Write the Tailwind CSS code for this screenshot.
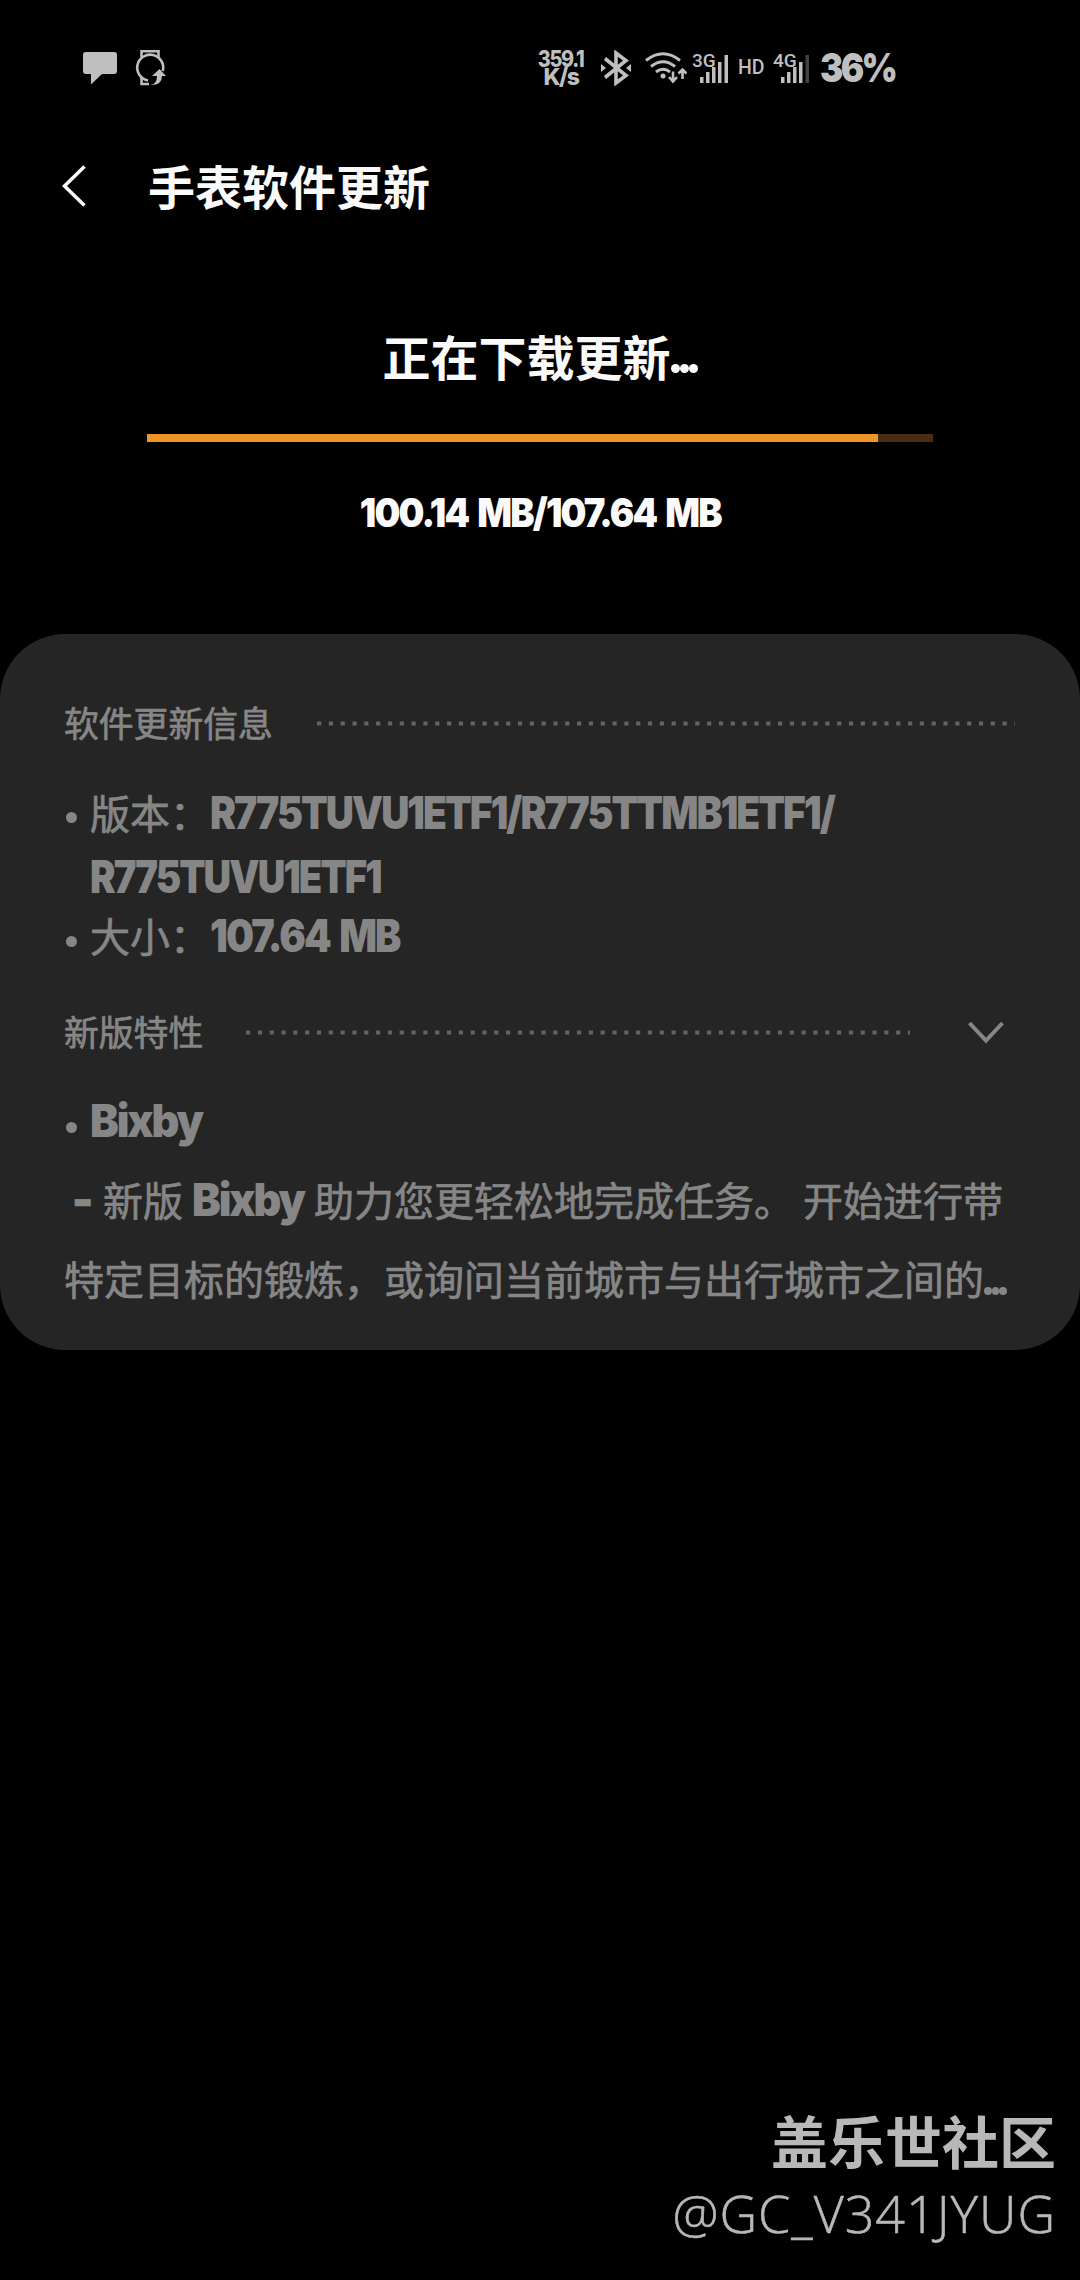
<!DOCTYPE html>
<html lang="zh-CN">
<head>
  <meta charset="UTF-8">
  <meta name="viewport" content="width=device-width, initial-scale=1.0">
  <title>手表软件更新</title>
  <script src="https://cdn.jsdelivr.net/npm/@tailwindcss/browser@4"></script>
</head>
<body class="bg-black">
<div class="w-[1080px] h-[2280px] flex flex-col overflow-hidden bg-black text-[#fafafa] font-['Noto_Sans_CJK_SC',sans-serif]">

  <!-- Status bar -->
  <header class="h-[136px] shrink-0 flex items-center pl-[83px] text-[#bfbfbf]">
    <svg class="w-[34px] h-[34px] mt-0.5 shrink-0" viewBox="0 0 34 34" fill="currentColor">
      <path d="M3 0H31Q34 0 34 3V19Q34 22 31 22H19L8 32.500V22H3Q0 22 0 19V3Q0 0 3 0Z"/>
    </svg>
    <svg class="w-[32px] h-[38px] ml-[18px] shrink-0" viewBox="0 0 32 38" fill="none" stroke="currentColor" stroke-width="2.6">
      <path d="M6.500 8V2.300H23.500V8"/>
      <path d="M27.800 22A13 13 0 1 0 13 31.500"/>
      <path d="M6.500 28V35H14"/>
      <path d="M14 36Q22 36 22 27H17L24.500 20L31 27H27Q27 37 14 36Z" fill="currentColor" stroke="none"/>
    </svg>

    <div class="w-[46px] ml-[371px] shrink-0 flex flex-col items-center font-['Inter',sans-serif] font-extrabold text-[23px] leading-[18px] tracking-[-1.5px]">
      <span class="scale-x-[0.86]">359.1</span>
      <span>K/s</span>
    </div>
    <svg class="w-[30px] h-[36px] ml-[17px] shrink-0" viewBox="0 0 30 36" fill="none" stroke="currentColor" stroke-width="3.6">
      <path d="M4 8.500L25 25.500L15 33V3L25 10.500L4 27.500"/>
      <path d="M0 14L5 18L0 22ZM30 14L25 18L30 22Z" fill="currentColor" stroke="none"/>
    </svg>
    <svg class="w-[42px] h-[32px] ml-[14px] shrink-0" viewBox="0 0 42 32" fill="none" stroke="currentColor" stroke-width="3">
      <path d="M1 8.500Q18 -5 35 8.500M6 14.500Q18 5 30 14.500M11 20Q18 14.500 25 20"/>
      <circle cx="18" cy="24" r="2.500" fill="currentColor" stroke="none"/>
      <path d="M28 19.500V29M24 25L28 29.500L32 25M37.500 27V18M33.500 21.500L37.500 17.500L41.500 21.500" stroke-width="2.600"/>
    </svg>
    <div class="relative w-[37px] h-[32px] ml-[5px] shrink-0">
      <span class="absolute left-0 top-0 font-['Roboto',sans-serif] font-medium text-[19px] leading-[18px]">3G</span>
      <svg class="absolute left-[8px] top-[3px] w-[28px] h-[28px]" viewBox="0 0 28 28" fill="currentColor">
        <path d="M0 22H3.500V28H0ZM6 17H9.500V28H6ZM12 12H15.500V28H12ZM18 7H21.500V28H18ZM24.500 0H28V28H24.500Z"/>
      </svg>
    </div>
    <span class="ml-[9px] w-[26px] font-['Roboto',sans-serif] font-medium text-[19.500px] leading-[30px]">HD</span>
    <div class="relative w-[37px] h-[32px] ml-[9px] shrink-0">
      <span class="absolute left-0 top-0 font-['Roboto',sans-serif] font-medium text-[19px] leading-[18px]">4G</span>
      <svg class="absolute left-[8px] top-[3px] w-[28px] h-[28px]" viewBox="0 0 28 28" fill="currentColor">
        <path d="M0 22H3.500V28H0ZM6 17H9.500V28H6ZM12 12H15.500V28H12ZM18 7H21.500V28H18Z"/>
        <path d="M24.500 0H28V28H24.500Z" opacity=".35"/>
      </svg>
    </div>
    <span class="ml-[10px] origin-left scale-x-[0.87] font-['Inter',sans-serif] font-black text-[40px] leading-[40px] tracking-[-3px]">36%</span>
  </header>

  <!-- Title bar -->
  <div class="h-[98px] shrink-0 flex items-center pl-[62px]">
    <svg class="w-[24px] h-[42px] mt-0.5" viewBox="0 0 24 42" fill="none" stroke="currentColor" stroke-width="3.500">
      <path d="M22.500 1.500L2.500 21L22.500 40.500"/>
    </svg>
    <h1 class="ml-[62px] text-[47px] leading-[70px] font-bold">手表软件更新</h1>
  </div>

  <!-- Download progress -->
  <section class="h-[400px] shrink-0 flex flex-col items-center">
    <div class="mt-[85px] h-[72px] flex items-center">
      <h2 class="text-[48px] leading-[72px] font-bold">正在下载更新</h2>
      <span class="flex mt-[26px]">
        <i class="size-[9px] rounded-full bg-current"></i>
        <i class="size-[9px] rounded-full bg-current"></i>
        <i class="size-[9px] rounded-full bg-current"></i>
      </span>
    </div>
    <div class="mt-[43px] w-[786px] h-2 bg-[#4a2c10]">
      <div class="h-full bg-[#ed9626]" style="width: 93%"></div>
    </div>
    <p class="mt-[47px] font-['Inter',sans-serif] font-black text-[40px] leading-[48px]"><span class="inline-block tracking-[-2px] [word-spacing:4px] scale-x-[0.91]">100.14 MB/107.64 MB</span></p>
  </section>

  <!-- Update info card -->
  <main class="h-[716px] shrink-0 rounded-[65px] bg-[#252525] text-[#868686] text-[40px] [-webkit-text-stroke:0.7px] px-16 pt-[62px]">
    <div class="h-[52px] flex items-center justify-between">
      <h3 class="text-[34.800px] leading-[52px]">软件更新信息</h3>
      <svg class="w-[698px] h-[5px] mt-[3px] mr-px" viewBox="0 0 698 5"><path d="M0 2.500H698" stroke="#636363" stroke-width="4.200" stroke-dasharray="4.200 7.620"/></svg>
    </div>
    <ul class="mt-8">
      <li class="flex">
        <i class="size-[11px] mt-8 ml-[2px] mr-[13px] rounded-full bg-current shrink-0"></i>
        <div>
          <p class="h-16 leading-[64px] whitespace-nowrap">版本：<span class="inline-block origin-left font-['Inter',sans-serif] font-black text-[45px] leading-none tracking-[-0.05em] [-webkit-text-stroke:0] scale-x-[0.867]">R775TUVU1ETF1/R775TTMB1ETF1/</span></p>
          <p class="h-16 leading-[64px]"><span class="inline-block origin-left font-['Inter',sans-serif] font-black text-[45px] leading-none tracking-[-0.05em] [-webkit-text-stroke:0] scale-x-[0.85]">R775TUVU1ETF1</span></p>
        </div>
      </li>
      <li class="flex">
        <i class="size-[11px] mt-[28px] ml-[2px] mr-[13px] rounded-full bg-current shrink-0"></i>
        <p class="h-[54px] leading-[54px]">大小：<span class="inline-block origin-left font-['Inter',sans-serif] font-black text-[45px] leading-none tracking-[-0.05em] [word-spacing:4px] [-webkit-text-stroke:0] scale-x-[0.878]">107.64 MB</span></p>
      </li>
    </ul>
    <div class="h-[52px] mt-[43px] flex items-center">
      <h3 class="text-[34.800px] leading-[52px]">新版特性</h3>
      <svg class="w-[664px] h-[5px] mt-[3px] ml-[43px]" viewBox="0 0 664 5"><path d="M0 2.500H664" stroke="#636363" stroke-width="4.200" stroke-dasharray="4.200 7.620"/></svg>
      <svg class="w-[36px] h-[23px] mt-0.5 ml-[58px]" viewBox="0 0 36 23" fill="none" stroke="currentColor" stroke-width="4"><path d="M1.500 2L18 19.500L34.500 2"/></svg>
    </div>
    <div class="mt-6 leading-[79px] whitespace-nowrap">
      <div class="h-[79px] flex">
        <i class="size-[11px] mt-[41px] ml-[2px] mr-[13px] rounded-full bg-current shrink-0"></i>
        <p><span class="inline-block origin-left font-['Inter',sans-serif] font-black text-[45px] leading-none tracking-[-0.05em] [-webkit-text-stroke:0] scale-x-[0.96]">Bixby</span></p>
      </div>
      <p class="h-[79px] pl-[8px]"><span class="inline-block w-[31px] font-['Inter',sans-serif] font-black text-[45px] leading-none">-</span>新版<span class="inline-block origin-left w-[114px] ml-[9px] font-['Inter',sans-serif] font-black text-[45px] leading-none tracking-[-0.05em] [-webkit-text-stroke:0] scale-x-[0.96]">Bixby</span><span class="ml-[8px]">助力您更轻松地完成任务。</span><span class="ml-[9px]">开始进行带</span></p>
      <div class="h-[79px] flex">
        <p>特定目标的锻炼，或询问当前城市与出行城市之间的</p>
        <span class="flex mt-[48px]">
          <i class="size-[7.5px] rounded-full bg-current"></i>
          <i class="size-[7.5px] rounded-full bg-current"></i>
          <i class="size-[7.5px] rounded-full bg-current"></i>
        </span>
      </div>
    </div>
  </main>

  <!-- Community signature -->
  <footer class="mt-auto pr-[24px] pb-[31px] flex flex-col items-end text-[#b8b8b8]">
    <p class="text-[57px] leading-[72px] font-bold">盖乐世社区</p>
    <p class="mt-0.5 font-['Open_Sans',sans-serif] font-light text-[52px] leading-[72px] tracking-[1px] [-webkit-text-stroke:0.6px]">@GC_V341JYUG</p>
  </footer>
</div>
</body>
</html>
